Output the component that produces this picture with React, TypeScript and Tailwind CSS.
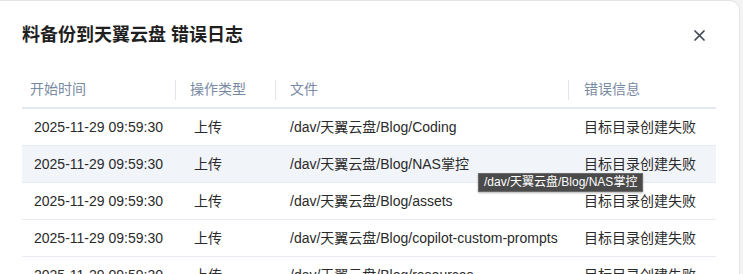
import React from "react";

const rows = [
  "/dav/天翼云盘/Blog/Coding",
  "/dav/天翼云盘/Blog/NAS掌控",
  "/dav/天翼云盘/Blog/assets",
  "/dav/天翼云盘/Blog/copilot-custom-prompts",
  "/dav/天翼云盘/Blog/resources",
];

export default function App() {
  return (
    <div
      className="w-[743px] h-[274px] overflow-hidden bg-[#f4f4f5] relative"
      style={{ fontFamily: '"Liberation Sans", "Noto Sans CJK SC", sans-serif' }}
    >
      <div className="w-[740px] h-[274px] bg-white rounded-tr-[10px] border-r border-t border-[#e4e4e7] relative">
        <div className="flex items-center justify-between pl-[22px] pr-[33px] mt-[22px] h-[24px]">
          <div className="text-[18px] font-bold text-[#1f1f1f] leading-[24px] whitespace-nowrap">
            料备份到天翼云盘 错误日志
          </div>
          <svg width="13" height="13" viewBox="0 0 13 13" className="text-[#3d4756]">
            <path d="M2 2 L11 11 M11 2 L2 11" stroke="currentColor" strokeWidth="1.7" strokeLinecap="round" />
          </svg>
        </div>

        <div className="ml-[22px] w-[694px] mt-[25px]">
          <div className="grid grid-cols-[153px_100px_293px_148px] h-[37px] border-b-2 border-[#e4e9f1] text-[14px] text-[#7889a3] items-center">
            <div className="pl-[8px]">开始时间</div>
            <div className="flex items-center h-full">
              <div className="w-px h-[20px] bg-[#e1e6ee]" />
              <div className="pl-[14px]">操作类型</div>
            </div>
            <div className="flex items-center h-full">
              <div className="w-px h-[20px] bg-[#e1e6ee]" />
              <div className="pl-[14px]">文件</div>
            </div>
            <div className="flex items-center h-full">
              <div className="w-px h-[20px] bg-[#e1e6ee]" />
              <div className="pl-[15px]">错误信息</div>
            </div>
          </div>
          {rows.map((r, i) => (
            <div
              key={i}
              className={`grid grid-cols-[153px_100px_293px_148px] h-[37px] border-b border-[#e8ecf2] text-[14px] text-[#2a2a2a] items-center whitespace-nowrap ${
                i === 1 ? "bg-[#f1f4f9]" : "bg-white"
              }`}
            >
              <div className="pl-[12px]">2025-11-29 09:59:30</div>
              <div className="pl-[19px]">上传</div>
              <div className="pl-[15px]">{r}</div>
              <div className="pl-[16px]">目标目录创建失败</div>
            </div>
          ))}
        </div>

        <div className="absolute left-[478px] top-[172px] h-[19px] px-[5px] bg-[#4a4a4a] border border-[#6a6a6a] text-white text-[12px] leading-[17px] whitespace-nowrap shadow-[0_1px_2px_rgba(0,0,0,0.3)]">
          /dav/天翼云盘/Blog/NAS掌控
        </div>
      </div>
    </div>
  );
}
